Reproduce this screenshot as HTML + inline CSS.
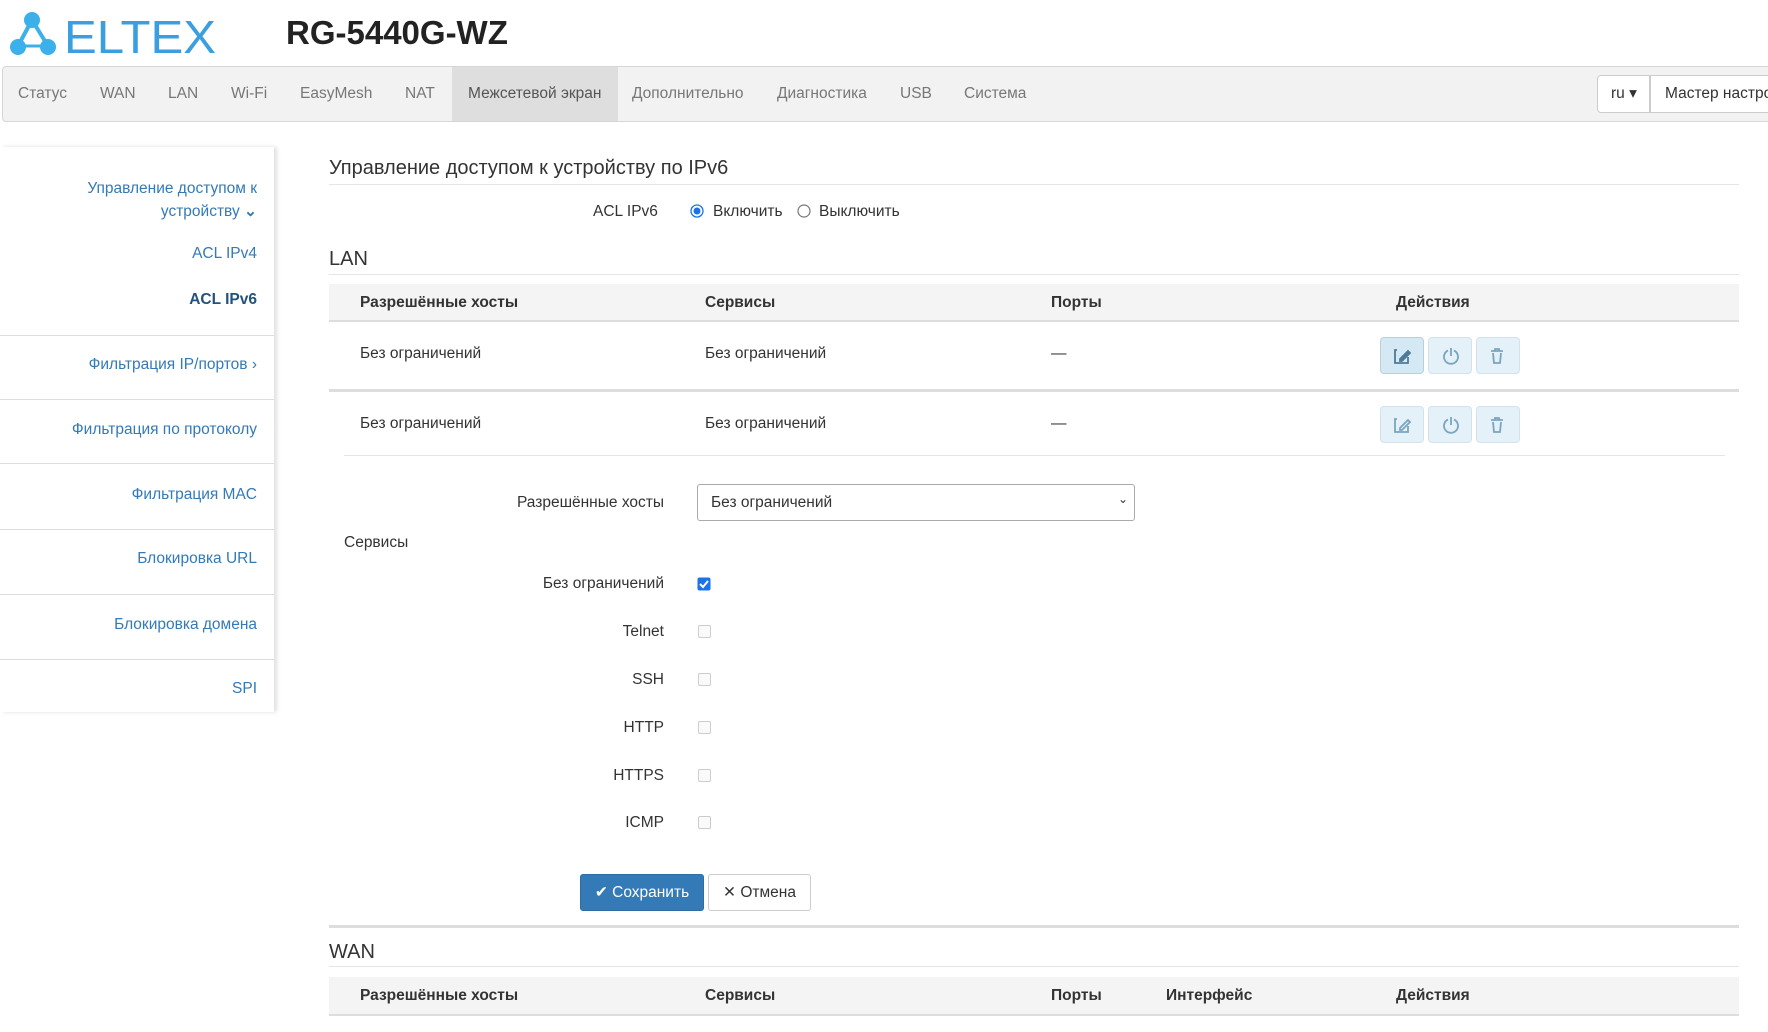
<!DOCTYPE html>
<html><head><meta charset="utf-8"><style>
*{box-sizing:border-box;margin:0;padding:0}
body{width:1768px;height:1032px;overflow:hidden;background:#fff;font-family:"Liberation Sans",Arial,sans-serif;color:#333;font-size:15.5px;position:relative}
.a{position:absolute;white-space:nowrap}
.nav{position:absolute;left:2px;top:66px;width:1780px;height:56px;background:#f2f2f2;border:1px solid #d6d6d6;border-radius:4px}
.ni{position:absolute;top:0;height:54px;line-height:54px;color:#777;font-size:15.5px;white-space:nowrap}
.side{position:absolute;left:0;top:147px;width:274px;height:565px;box-shadow:3px 0 4px rgba(0,0,0,.12);background:#fff}
.sl{position:absolute;right:17px;color:#337ab7;font-size:15.5px;text-align:right;white-space:nowrap}
.sep{position:absolute;left:0;width:274px;border-top:1px solid #ddd}
.hl{position:absolute;left:329px;width:1410px;border-top:1px solid #e5e5e5}
.th{position:absolute;left:329px;width:1410px;background:#f4f4f4;font-weight:bold;border-bottom:2px solid #ddd}
.btn{position:absolute;width:44px;height:37px;background:#e4f1f9;border:1px solid #d3e2ec;border-radius:4px}
.cb{position:absolute;left:698px;width:13px;height:13px;border:1px solid #ccc;border-radius:2px;background:#fafafa}
.lab{position:absolute;right:1104px;text-align:right;white-space:nowrap}
</style></head><body>
<svg class="a" style="left:8px;top:10px" width="215" height="48" viewBox="0 0 215 48">
<g fill="#3bb0ea" stroke="#3bb0ea">
<line x1="24" y1="10" x2="10" y2="36" stroke-width="4"/><line x1="24" y1="10" x2="40" y2="36" stroke-width="4"/><line x1="10" y1="36" x2="40" y2="36" stroke-width="3"/>
<circle cx="24" cy="10" r="8" stroke="none"/><circle cx="10" cy="37" r="8" stroke="none"/><circle cx="40" cy="37" r="8" stroke="none"/></g>
<text x="56" y="43" font-size="46" fill="#3a9ee0" font-family="Liberation Sans" textLength="152" lengthAdjust="spacingAndGlyphs">ELTEX</text>
</svg>
<div class="a" style="left:286px;top:14px;font-size:33px;font-weight:bold;color:#222">RG-5440G-WZ</div>
<div class="nav">
<div class="ni" style="left:15px">Статус</div><div class="ni" style="left:97px">WAN</div><div class="ni" style="left:165px">LAN</div><div class="ni" style="left:228px">Wi-Fi</div><div class="ni" style="left:297px">EasyMesh</div><div class="ni" style="left:402px">NAT</div>
<div class="ni" style="left:449px;width:166px;background:#dedede;color:#555;padding-left:16px">Межсетевой экран</div>
<div class="ni" style="left:629px">Дополнительно</div><div class="ni" style="left:774px">Диагностика</div><div class="ni" style="left:897px">USB</div><div class="ni" style="left:961px">Система</div>
<div class="ni" style="left:1594px;top:0;height:38px;line-height:36px;margin-top:8px;width:53px;border:1px solid #ccc;background:#fff;color:#333;padding-left:13px;border-radius:4px 0 0 4px">ru ▾</div>
<div class="ni" style="left:1647px;height:38px;line-height:36px;margin-top:8px;width:160px;border:1px solid #ccc;background:#fff;color:#333;padding-left:14px">Мастер настройки</div>
</div>
<div class="side">
<div class="sl" style="top:30px;line-height:23px">Управление доступом к<br>устройству <b>⌄</b></div>
<div class="sl" style="top:98px">ACL IPv4</div>
<div class="sl" style="top:144px;font-weight:bold;color:#23527c">ACL IPv6</div>
<div class="sep" style="top:188px"></div>
<div class="sl" style="top:209px">Фильтрация IP/портов ›</div>
<div class="sep" style="top:252px"></div>
<div class="sl" style="top:274px">Фильтрация по протоколу</div>
<div class="sep" style="top:316px"></div>
<div class="sl" style="top:339px">Фильтрация MAC</div>
<div class="sep" style="top:382px"></div>
<div class="sl" style="top:403px">Блокировка URL</div>
<div class="sep" style="top:447px"></div>
<div class="sl" style="top:469px">Блокировка домена</div>
<div class="sep" style="top:512px"></div>
<div class="sl" style="top:533px">SPI</div>
</div>
<div class="a" style="left:329px;top:157px;font-size:20px">Управление доступом к устройству по IPv6</div>
<div class="hl" style="top:184px"></div>
<div class="a" style="left:593px;top:203px">ACL IPv6</div>
<svg class="a" style="left:690px;top:204px" width="14" height="14"><circle cx="7" cy="7" r="6" fill="#fff" stroke="#1a73e8" stroke-width="1.3"/><circle cx="7" cy="7" r="3.5" fill="#1a73e8"/></svg>
<div class="a" style="left:713px;top:203px">Включить</div>
<svg class="a" style="left:797px;top:204px" width="14" height="14"><circle cx="7" cy="7" r="6" fill="#fff" stroke="#767676" stroke-width="1.2"/></svg>
<div class="a" style="left:819px;top:203px">Выключить</div>
<div class="a" style="left:329px;top:248px;font-size:20px">LAN</div>
<div class="hl" style="top:274px"></div>
<div class="th" style="top:284px;height:38px"><span class="a" style="left:31px;top:10px">Разрешённые хосты</span><span class="a" style="left:376px;top:10px">Сервисы</span><span class="a" style="left:722px;top:10px">Порты</span><span class="a" style="left:1067px;top:10px">Действия</span></div>
<div class="a" style="left:360px;top:345px">Без ограничений</div><div class="a" style="left:705px;top:345px">Без ограничений</div><div class="a" style="left:1051px;top:345px">—</div>
<div class="btn" style="left:1380px;top:337px;background:#d5e9f4;border-color:#b9cfdc"></div><div class="btn" style="left:1428px;top:337px"></div><div class="btn" style="left:1476px;top:337px"></div>
<div class="a" style="left:329px;top:389px;width:1410px;border-top:3px solid #ddd"></div>
<div class="a" style="left:360px;top:415px">Без ограничений</div><div class="a" style="left:705px;top:415px">Без ограничений</div><div class="a" style="left:1051px;top:415px">—</div>
<div class="btn" style="left:1380px;top:406px"></div><div class="btn" style="left:1428px;top:406px"></div><div class="btn" style="left:1476px;top:406px"></div>
<svg class="a" style="left:1380px;top:337px" width="140" height="106" fill="none" stroke="#4e7a98" stroke-width="1.8">
<g><path d="M17 13h-2v13h13v-6"/><path d="M20 22l8-8 2 2-8 8h-2z" fill="#4e7a98"/></g>
<g stroke="#7aa5c0"><path d="M68 13.5a7 7 0 1 0 6 0"/><line x1="71" y1="11" x2="71" y2="19"/></g>
<g stroke="#7aa5c0"><path d="M111 14h12M115 14v-2h4v2M113 16l1 10h6l1-10"/></g>
<g stroke="#7aa5c0" transform="translate(0,69)"><path d="M17 13h-2v13h13v-6"/><path d="M20 22l8-8 2 2-8 8h-2z"/></g>
<g stroke="#7aa5c0" transform="translate(0,69)"><path d="M68 13.5a7 7 0 1 0 6 0"/><line x1="71" y1="11" x2="71" y2="19"/></g>
<g stroke="#7aa5c0" transform="translate(0,69)"><path d="M111 14h12M115 14v-2h4v2M113 16l1 10h6l1-10"/></g>
</svg>
<div class="a" style="left:344px;top:455px;width:1381px;border-top:1px solid #e5e5e5"></div>
<div class="lab" style="top:494px">Разрешённые хосты</div>
<div class="a" style="left:697px;top:484px;width:438px;height:37px;border:1px solid #aaa;border-radius:3px;padding:9px 13px">Без ограничений<span style="position:absolute;right:6px;top:7px;font-size:12px">⌄</span></div>
<div class="a" style="left:344px;top:534px">Сервисы</div>
<div class="lab" style="top:575px">Без ограничений</div>
<svg class="a" style="left:697px;top:577px" width="14" height="14"><rect x=".5" y=".5" width="13" height="13" rx="2" fill="#1a73e8"/><path d="M3 7l3 3 5-6" stroke="#fff" stroke-width="2" fill="none"/></svg>
<div class="lab" style="top:623px">Telnet</div><div class="cb" style="top:625px"></div>
<div class="lab" style="top:671px">SSH</div><div class="cb" style="top:673px"></div>
<div class="lab" style="top:719px">HTTP</div><div class="cb" style="top:721px"></div>
<div class="lab" style="top:767px">HTTPS</div><div class="cb" style="top:769px"></div>
<div class="lab" style="top:814px">ICMP</div><div class="cb" style="top:816px"></div>
<div class="a" style="left:580px;top:874px;width:124px;height:37px;background:#337ab7;border:1px solid #2e6da4;border-radius:3px;color:#fff;line-height:35px;text-align:center">✔ Сохранить</div>
<div class="a" style="left:708px;top:874px;width:103px;height:37px;background:#fff;border:1px solid #ccc;border-radius:3px;line-height:35px;text-align:center">✕ Отмена</div>
<div class="a" style="left:329px;top:925px;width:1410px;border-top:3px solid #ddd"></div>
<div class="a" style="left:329px;top:941px;font-size:20px">WAN</div>
<div class="hl" style="top:966px"></div>
<div class="th" style="top:977px;height:39px"><span class="a" style="left:31px;top:10px">Разрешённые хосты</span><span class="a" style="left:376px;top:10px">Сервисы</span><span class="a" style="left:722px;top:10px">Порты</span><span class="a" style="left:837px;top:10px">Интерфейс</span><span class="a" style="left:1067px;top:10px">Действия</span></div>
</body></html>
